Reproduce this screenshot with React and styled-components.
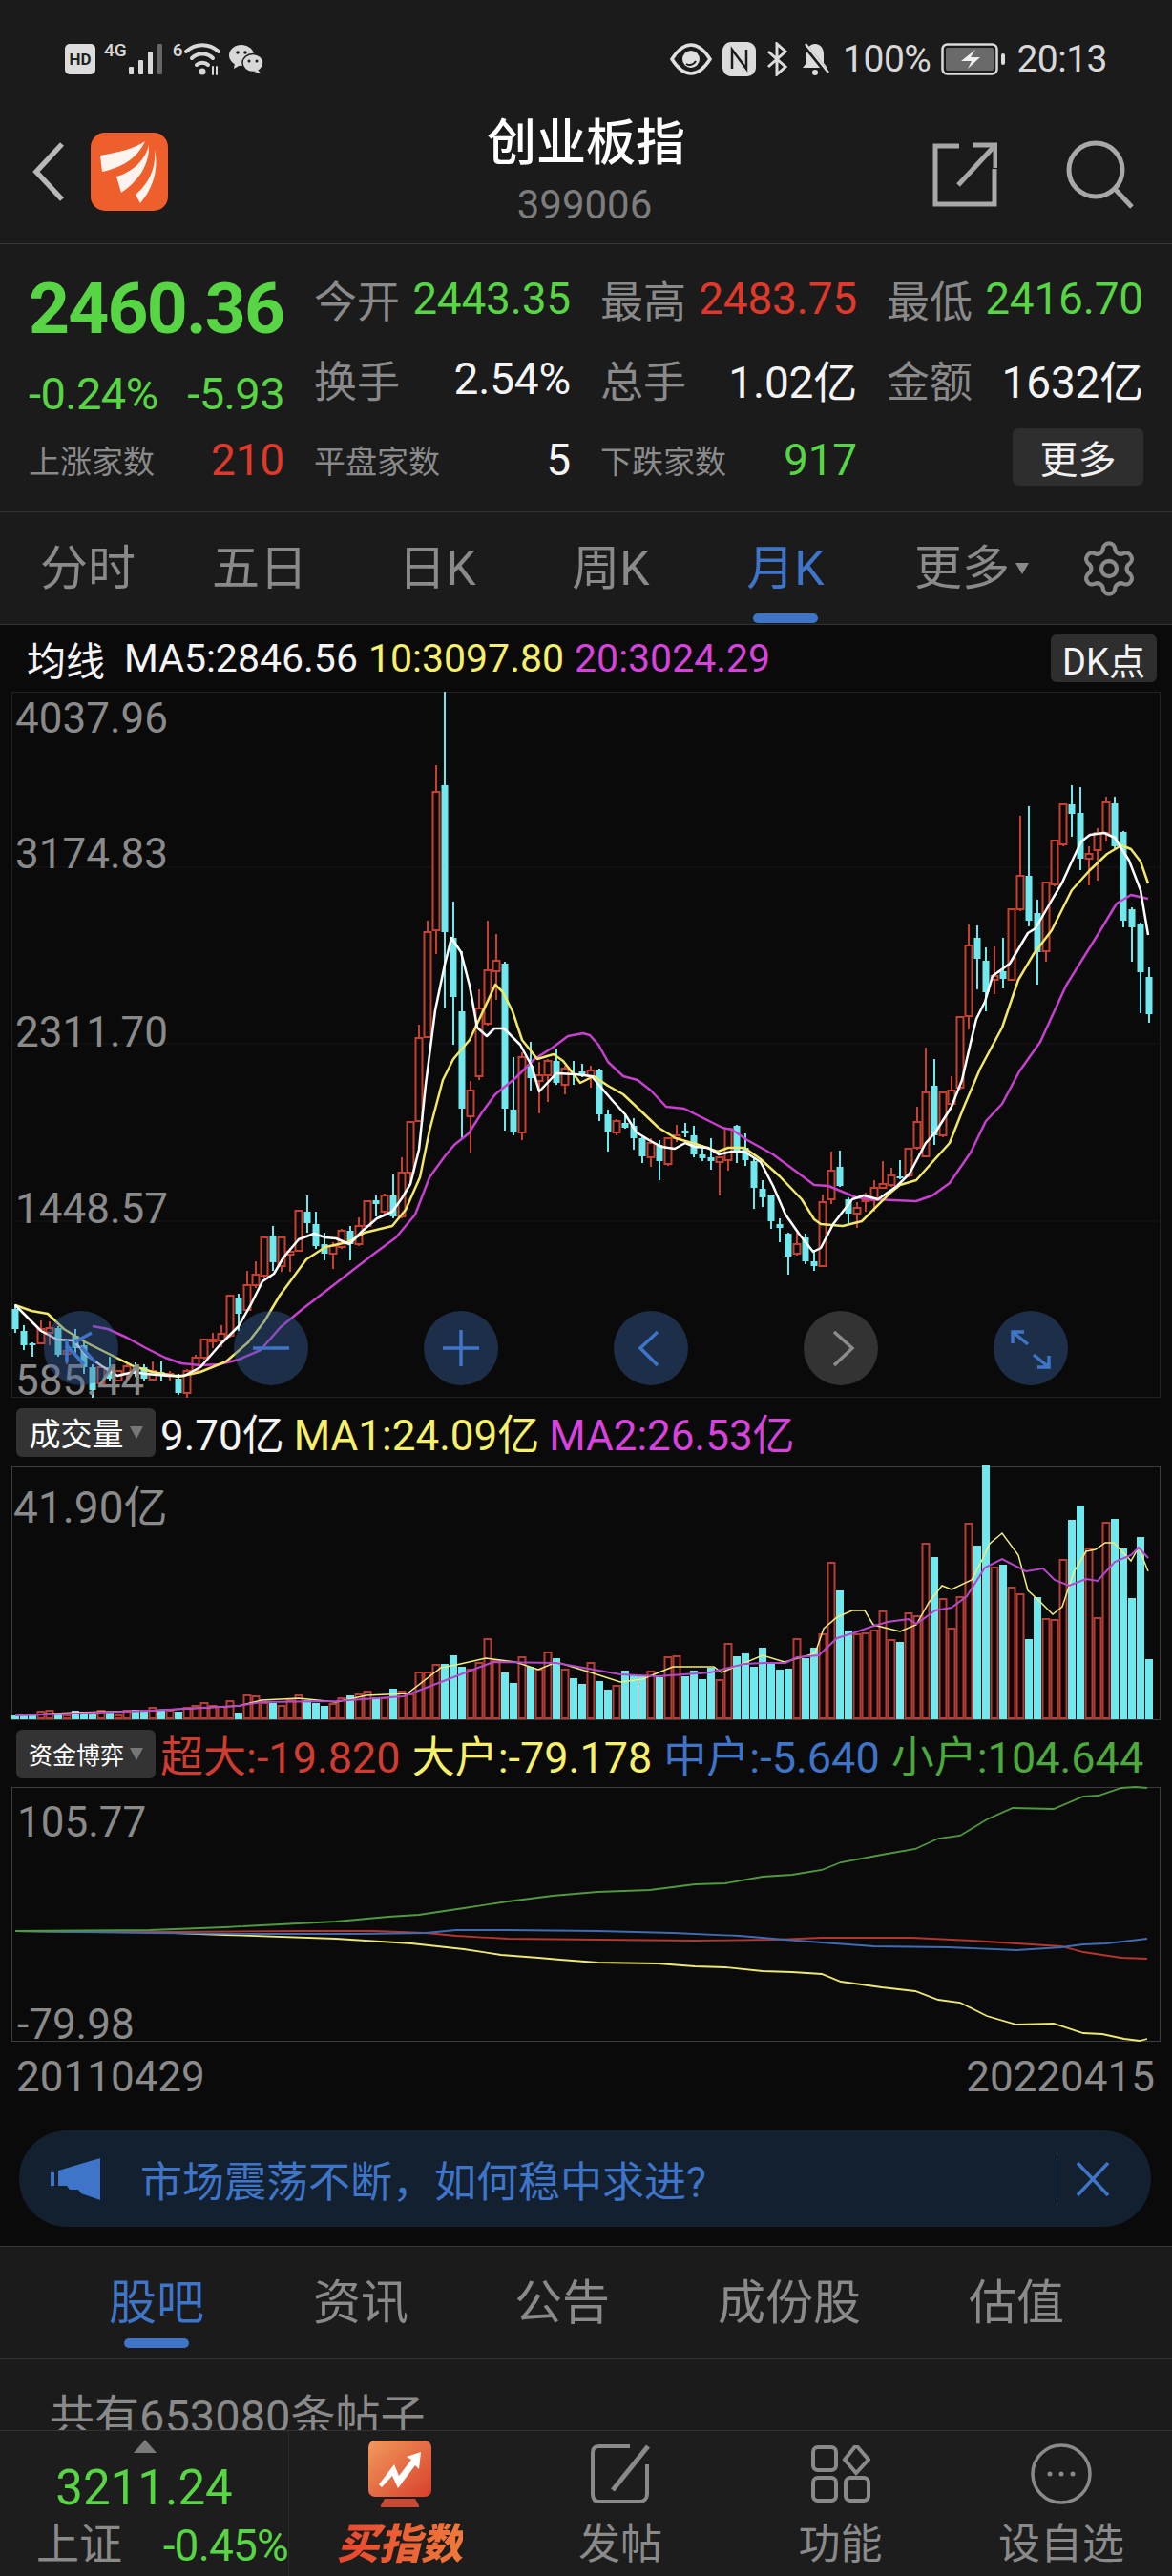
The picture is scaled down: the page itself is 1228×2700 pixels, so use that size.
import React from 'react'
import styled, { createGlobalStyle } from 'styled-components'
import { Settings } from 'lucide-react'

const GRAY = '#8a8a8a'
const BLUE = '#3f75c9'
const GREEN = '#58d544'
const RED = '#e0392b'
const WHITE = '#f4f4f4'
const YELLOW = '#f7f06a'
const MAGENTA = '#d743dc'
const CYAN = '#6fe9ee'
const CANDLE_RED = '#c8402f'
const PANEL = '#1b1b1b'
const DARK = '#0a0a0a'

// candles: type, high, body top, body bottom, low (page pixels)
const CANDLES = [
  ['c',1367,1372,1393,1397],['c',1389,1395,1410,1415],['c',1407,1408,1410,1422],['r',1384,1393,1408,1408],
  ['r',1385,1392,1397,1410],['c',1390,1392,1420,1422],['r',1407,1416,1419,1430],['c',1393,1400,1413,1420],
  ['c',1405,1410,1433,1440],['c',1430,1433,1457,1465],['r',1433,1433,1450,1452],['c',1422,1433,1445,1447],
  ['r',1437,1437,1447,1448],['r',1430,1432,1440,1445],['c',1428,1436,1440,1443],['c',1430,1433,1445,1447],
  ['r',1427,1437,1446,1447],['c',1427,1438,1441,1447],['r',1437,1440,1442,1447],['c',1440,1445,1460,1462],
  ['r',1435,1437,1460,1465],['r',1420,1423,1437,1440],['r',1404,1404,1423,1425],['r',1397,1404,1406,1413],
  ['r',1389,1398,1405,1412],['r',1357,1358,1400,1402],['c',1356,1360,1377,1395],['r',1332,1347,1373,1375],
  ['r',1322,1336,1347,1350],['r',1296,1297,1337,1340],['c',1285,1295,1323,1332],['r',1296,1297,1327,1333],
  ['r',1308,1312,1315,1333],['r',1268,1269,1311,1312],['c',1253,1270,1282,1292],['c',1270,1283,1306,1309],
  ['c',1292,1304,1314,1321],['r',1302,1306,1314,1330],['r',1288,1290,1307,1309],['c',1285,1290,1304,1321],
  ['r',1276,1285,1304,1306],['r',1258,1259,1285,1286],['c',1253,1258,1262,1275],['r',1251,1253,1270,1273],
  ['c',1231,1253,1275,1277],['r',1213,1229,1275,1277],['r',1175,1176,1229,1241],['r',1074,1088,1175,1176],
  ['r',965,977,1087,1088],['r',802,830,975,1000],['c',725,823,977,1057],['c',945,983,1045,1095],
  ['c',997,1060,1162,1193],['r',1133,1143,1170,1208],['r',1037,1057,1128,1132],['r',965,1017,1073,1075],
  ['r',979,1007,1018,1048],['c',1008,1010,1162,1185],['c',1108,1163,1187,1190],['r',1103,1108,1187,1195],
  ['c',1092,1117,1130,1143],['r',1113,1127,1133,1167],['r',1110,1112,1127,1155],['c',1100,1112,1135,1137],
  ['r',1117,1120,1137,1147],['c',1112,1125,1127,1137],['c',1115,1123,1127,1129],['r',1117,1122,1128,1140],
  ['c',1120,1122,1168,1175],['c',1163,1168,1186,1207],['r',1173,1175,1187,1190],['c',1167,1177,1182,1183],
  ['c',1172,1180,1193,1205],['c',1192,1193,1212,1219],['r',1193,1198,1213,1223],['c',1195,1200,1217,1237],
  ['r',1192,1193,1220,1222],['r',1179,1190,1193,1197],['c',1177,1185,1188,1192],['c',1180,1190,1210,1213],
  ['c',1200,1210,1214,1217],['c',1193,1213,1217,1226],['r',1212,1213,1218,1253],['r',1182,1183,1216,1227],
  ['c',1179,1180,1207,1219],['c',1188,1203,1216,1222],['c',1213,1217,1245,1267],['c',1237,1246,1255,1265],
  ['c',1252,1253,1280,1288],['c',1277,1283,1287,1302],['c',1292,1293,1317,1336],['r',1292,1304,1314,1316],
  ['c',1293,1297,1322,1325],['c',1310,1322,1327,1332],['r',1252,1260,1327,1328],['r',1207,1227,1257,1262],
  ['c',1206,1223,1243,1244],['c',1255,1257,1272,1282],['r',1260,1266,1272,1287],['r',1250,1257,1259,1270],
  ['r',1237,1245,1258,1270],['r',1217,1241,1245,1246],['r',1224,1232,1242,1244],['c',1216,1233,1235,1236],
  ['r',1203,1204,1232,1234],['r',1160,1176,1203,1205],['r',1098,1145,1212,1213],['c',1110,1138,1190,1200],
  ['r',1144,1145,1190,1192],['r',1128,1143,1157,1163],['r',1065,1066,1140,1142],['r',969,991,1065,1079],
  ['c',970,983,1005,1037],['c',993,1007,1040,1060],['r',992,1023,1027,1042],['c',983,1018,1026,1036],
  ['r',952,953,1027,1028],['r',855,918,953,955],['c',845,918,965,971],['c',943,957,998,1032],
  ['r',924,925,997,1008],['r',880,881,927,929],['r',842,843,885,887],['c',823,843,853,877],
  ['c',825,852,900,912],['r',887,895,900,928],['r',868,873,891,923],['r',835,841,873,882],
  ['c',835,842,887,889],['c',871,872,965,972],['c',951,953,972,1008],['c',967,968,1019,1062],
  ['c',1014,1024,1063,1072]
]

const MA5 = '16,1368 43,1395 60,1404 77,1405 90,1420 107,1432 123,1442 140,1438 153,1440 177,1442 193,1442 210,1433 230,1410 250,1390 263,1367 275,1343 287,1335 297,1318 313,1299 329,1293 341,1297 352,1298 366,1304 380,1290 395,1277 411,1270 421,1256 430,1241 439,1205 446,1137 456,1059 466,1011 473,983 483,998 492,1033 500,1077 510,1086 518,1078 528,1078 545,1095 557,1117 565,1144 583,1125 603,1126 620,1128 630,1140 643,1155 655,1168 667,1187 680,1195 693,1202 707,1204 718,1198 728,1202 742,1203 753,1210 767,1207 780,1207 797,1218 810,1243 823,1273 837,1293 852,1312 860,1308 873,1283 893,1257 905,1253 920,1257 940,1243 953,1230 970,1198 980,1187 997,1160 1008,1132 1017,1093 1023,1068 1032,1050 1040,1023 1058,1010 1077,978 1085,973 1100,947 1113,925 1123,903 1133,882 1142,875 1157,873 1168,878 1183,902 1195,933 1203,980'
const MA10 = '16,1368 33,1374 50,1377 67,1393 90,1407 110,1417 140,1432 160,1438 187,1443 210,1438 237,1427 260,1407 277,1385 293,1358 310,1335 321,1320 341,1307 364,1302 382,1292 411,1285 425,1268 440,1234 450,1185 464,1132 475,1110 492,1090 500,1073 519,1032 527,1040 537,1060 547,1090 563,1110 580,1105 590,1112 608,1135 622,1128 637,1138 653,1147 670,1163 690,1182 708,1193 732,1200 752,1207 763,1203 780,1203 797,1215 817,1233 840,1257 853,1278 860,1283 883,1285 903,1280 933,1250 943,1242 960,1237 977,1218 995,1198 1010,1160 1027,1120 1050,1077 1067,1027 1083,1000 1102,975 1123,933 1142,912 1160,895 1175,886 1185,890 1195,903 1203,926'
const MA20 = '97,1390 113,1393 133,1402 153,1413 173,1423 190,1429 210,1431 230,1430 250,1425 273,1415 294,1391 317,1372 352,1345 392,1314 415,1297 435,1273 450,1234 466,1212 476,1200 491,1188 505,1166 519,1147 540,1130 560,1110 579,1098 595,1086 611,1083 618,1085 627,1095 637,1113 653,1128 668,1132 682,1143 698,1160 717,1162 743,1175 757,1182 767,1184 783,1195 810,1210 837,1230 853,1242 868,1243 897,1255 913,1257 960,1259 977,1253 995,1240 1017,1208 1033,1175 1050,1157 1068,1123 1090,1092 1117,1033 1150,980 1170,947 1185,938 1203,942'

const VOL_TOPS = [
  1798,1798,1798,1794,1793,1797,1798,1793,1796,1797,1793,1795,1798,1793,1792,1793,1790,1792,1793,1794,
  1790,1788,1785,1788,1789,1783,1795,1777,1778,1785,1785,1788,1782,1777,1782,1785,1788,1786,1780,1777,
  1776,1773,1779,1780,1770,1773,1776,1753,1753,1745,1744,1735,1747,1750,1743,1718,1740,1753,1764,1737,
  1747,1750,1732,1738,1750,1759,1765,1743,1762,1771,1767,1751,1756,1757,1752,1758,1737,1736,1757,1751,
  1760,1748,1761,1723,1736,1733,1747,1727,1743,1750,1749,1718,1738,1727,1713,1638,1667,1709,1713,1712,
  1709,1689,1719,1721,1691,1694,1618,1632,1676,1707,1674,1597,1620,1536,1643,1640,1664,1671,1718,1674,
  1697,1698,1635,1593,1578,1623,1696,1596,1592,1623,1675,1611,1739
]
const VOL_MA1 = '16,1798 78,1795 157,1793 250,1788 274,1782 313,1780 352,1784 384,1777 427,1775 462,1748 478,1745 509,1738 540,1742 564,1750 583,1742 619,1753 650,1763 673,1760 705,1747 748,1747 756,1753 799,1735 822,1742 854,1733 863,1707 877,1695 893,1688 906,1688 915,1703 943,1710 960,1703 973,1680 987,1662 997,1666 1018,1656 1028,1637 1037,1618 1050,1607 1067,1630 1077,1667 1088,1677 1103,1692 1113,1684 1125,1648 1138,1626 1148,1624 1158,1617 1167,1617 1185,1636 1193,1622 1203,1647'
const VOL_MA2 = '16,1798 78,1796 157,1793 250,1788 274,1784 352,1783 423,1778 462,1763 501,1748 517,1742 583,1743 650,1755 689,1757 744,1753 780,1744 800,1743 823,1743 835,1737 858,1735 877,1717 893,1712 913,1705 930,1700 952,1697 960,1702 980,1688 997,1685 1013,1673 1032,1643 1050,1634 1075,1647 1093,1644 1105,1656 1120,1662 1138,1655 1150,1657 1168,1637 1185,1630 1193,1622 1203,1633'

const FUND_GREEN = '16,2024 157,2023 235,2020 352,2014 407,2009 439,2007 486,2000 532,1993 579,1987 626,1983 681,1981 728,1975 760,1974 799,1967 830,1965 861,1960 881,1952 924,1944 959,1938 983,1927 1006,1924 1034,1907 1061,1895 1104,1896 1135,1883 1151,1882 1175,1874 1190,1873 1202,1874'
const FUND_YELLOW = '16,2024 157,2025 235,2028 352,2032 431,2037 486,2043 525,2049 564,2052 587,2054 626,2057 689,2058 728,2061 760,2062 799,2066 830,2067 861,2069 881,2077 924,2083 959,2087 983,2096 1006,2099 1034,2113 1065,2122 1104,2121 1135,2131 1155,2132 1178,2137 1194,2139 1202,2137'
const FUND_BLUE = '16,2024 157,2026 274,2027 376,2027 446,2026 478,2023 532,2023 626,2024 705,2026 775,2029 822,2033 861,2036 916,2040 994,2041 1065,2044 1112,2041 1135,2038 1159,2037 1202,2032'
const FUND_RED = '16,2024 157,2025 313,2024 392,2024 446,2026 478,2029 532,2032 626,2033 728,2034 814,2033 861,2031 955,2031 1018,2034 1112,2040 1135,2046 1175,2052 1202,2053'

const candleX = i => 16 + 9 * i

const GlobalStyle = createGlobalStyle`
  body {
    margin: 0;
    background: ${DARK};
    font-family: Roboto, "Noto Sans CJK SC", sans-serif;
  }
`

const Page = styled.div`
  width: 1228px;
  height: 2700px;
  overflow: hidden;
  background: ${DARK};
  color: ${WHITE};
`

const TopPanel = styled.div`
  background: ${PANEL};
`

const StatusBar = styled.div`
  height: 110px;
  padding: 14px 68px 0;
  box-sizing: border-box;
  display: flex;
  align-items: center;
  justify-content: space-between;
  color: #d8d8d8;
`

const StatusGroup = styled.div`
  display: flex;
  align-items: center;
  gap: ${p => p.$gap || 10}px;
`

const HdBadge = styled.div`
  width: 32px;
  height: 32px;
  border-radius: 5px;
  background: #dcdcdc;
  color: #222;
  font-size: 17px;
  font-weight: 700;
  display: flex;
  align-items: center;
  justify-content: center;
`

const TinyMark = styled.span`
  font-size: ${p => p.$size || 19}px;
  font-weight: 500;
  align-self: flex-start;
  margin-right: -8px;
  line-height: 18px;
`

const StatusText = styled.span`
  font-size: 39px;
  line-height: 44px;
  letter-spacing: -0.5px;
`

const HeaderBar = styled.div`
  height: 145px;
  display: grid;
  grid-template-columns: 1fr auto 1fr;
  border-bottom: 1px solid #383838;
`

const HeaderLeft = styled.div`
  display: flex;
  align-items: center;
  gap: 26px;
  padding: 0 0 6px 33px;
`

const LogoBox = styled.div`
  width: 81px;
  height: 82px;
  border-radius: 15px;
  background: #ef5f2b;
  display: flex;
`

const TitleBlock = styled.div`
  display: flex;
  flex-direction: column;
  align-items: center;
  padding-top: 13px;
`

const Title = styled.div`
  font-size: 52px;
  line-height: 56px;
  font-weight: 500;
  color: #fff;
`

const Code = styled.div`
  font-size: 42px;
  line-height: 50px;
  margin: 11px 3px 0 0;
  color: #7d7d7d;
`

const HeaderRight = styled.div`
  display: flex;
  align-items: center;
  justify-content: flex-end;
  gap: 72px;
  padding: 0 39px 0 0;
`

const QuoteGrid = styled.div`
  display: grid;
  grid-template-columns: 268px 269px 269px 269px;
  grid-template-rows: 84px 84px 86px;
  column-gap: 31px;
  padding: 15px 0 11px 30px;
  background: ${PANEL};
  border-bottom: 1px solid #333;
`

const Price = styled.div`
  font-size: 75px;
  line-height: 64px;
  font-weight: 700;
  letter-spacing: -1.8px;
  color: ${GREEN};
  align-self: end;
  white-space: nowrap;
`

const ChangeRow = styled.div`
  display: flex;
  justify-content: space-between;
  align-items: center;
  padding-top: 30px;
  font-size: 47px;
  letter-spacing: -0.6px;
  color: ${GREEN};
`

const Stat = styled.div`
  display: flex;
  justify-content: space-between;
  align-items: center;
  white-space: nowrap;
`

const StatLabel = styled.span`
  color: ${GRAY};
  font-size: ${p => p.$size}px;
`

const StatValue = styled.span`
  color: ${p => p.$color};
  font-size: 46px;
  letter-spacing: -0.2px;
`

const MoreButton = styled.div`
  justify-self: end;
  align-self: center;
  width: 137px;
  height: 60px;
  margin-top: -6px;
  border-radius: 6px;
  background: #2e2e2e;
  color: #f0f0f0;
  font-size: 40px;
  display: flex;
  align-items: center;
  justify-content: center;
`

const PeriodTabs = styled.div`
  height: 117px;
  display: grid;
  grid-template-columns: 184px 176px 196px 168px 198px 192px 96px;
  align-items: center;
  background: ${PANEL};
  border-bottom: 1px solid #333;
`

const TabCell = styled.div`
  position: relative;
  text-align: center;
  font-size: 50px;
  line-height: 60px;
  color: ${p => (p.$active ? BLUE : GRAY)};
  display: flex;
  justify-content: center;
  align-items: center;
  white-space: nowrap;

  &::after {
    content: '';
    display: ${p => (p.$active ? 'block' : 'none')};
    position: absolute;
    left: 50%;
    bottom: -${p => p.$lineOffset || 17}px;
    width: 68px;
    height: 10px;
    margin-left: -34px;
    border-radius: 5px;
    background: ${BLUE};
  }
`

const Caret = styled.span`
  width: 0;
  height: 0;
  margin-left: 6px;
  border-left: 7px solid transparent;
  border-right: 7px solid transparent;
  border-top: 12px solid ${GRAY};
`

const LegendRow = styled.div`
  height: ${p => p.$height}px;
  display: flex;
  align-items: center;
  gap: ${p => p.$gap || 15}px;
  padding: 0 ${p => p.$right || 0}px 0 ${p => p.$left}px;
  font-size: ${p => p.$size}px;
  white-space: nowrap;
`

const LegendText = styled.span`
  color: ${p => p.$color || WHITE};
  margin-left: ${p => p.$offset || 0}px;
`

const DkBadge = styled.div`
  margin-left: auto;
  width: 111px;
  height: 50px;
  border-radius: 6px;
  background: #2e2e2e;
  display: flex;
  align-items: center;
  justify-content: center;
  font-size: 38px;
`

const IndicatorSelect = styled.div`
  width: 146px;
  height: 51px;
  border-radius: 6px;
  background: #333;
  color: #fff;
  display: flex;
  align-items: center;
  justify-content: center;
  gap: 6px;
  font-size: ${p => p.$size}px;
`

const SelectCaret = styled.span`
  width: 0;
  height: 0;
  border-left: 7px solid transparent;
  border-right: 7px solid transparent;
  border-top: 13px solid #777;
`

const ChartFrame = styled.div`
  position: relative;
  width: 1204px;
  height: ${p => p.$height}px;
  margin-left: 12px;
  box-shadow: inset 0 0 0 1px ${p => p.$border};
`

const ChartSvg = styled.svg`
  position: absolute;
  left: 0;
  top: 0;
  overflow: visible;
`

const AxisLabel = styled.div`
  position: absolute;
  left: ${p => p.$left || 4}px;
  top: ${p => p.$top}px;
  font-size: ${p => p.$size || 44}px;
  line-height: 50px;
  color: ${GRAY};
  white-space: nowrap;
`

const ZoomControls = styled.div`
  position: absolute;
  left: 34px;
  top: 649px;
  display: flex;
  gap: 121px;
`

const ZoomButton = styled.div`
  width: 78px;
  height: 78px;
  border-radius: 50%;
  background: ${p => (p.$muted ? 'rgba(110,110,110,.42)' : 'rgba(58,100,160,.42)')};
  display: flex;
`

const DateRow = styled.div`
  height: 74px;
  padding: 0 18px 0 17px;
  display: flex;
  align-items: center;
  justify-content: space-between;
  font-size: 44px;
  color: ${GRAY};
`

const NoticeWrap = styled.div`
  padding: 19px 22px 20px 20px;
`

const NoticePill = styled.div`
  height: 101px;
  border-radius: 50px;
  background: #13202f;
  display: flex;
  align-items: center;
  padding: 0 43px 0 33px;
  color: ${BLUE};
  font-size: 44px;
`

const NoticeText = styled.span`
  margin-left: 42px;
  flex: 1;
`

const NoticeClose = styled.div`
  border-left: 1px solid #33537f;
  padding-left: 19px;
  height: 44px;
  display: flex;
  align-items: center;
`

const LowerPanel = styled.div`
  background: ${PANEL};
  border-top: 1px solid #383838;
`

const NewsTabs = styled.div`
  height: 117px;
  padding-left: 57px;
  display: grid;
  grid-template-columns: 214px 214px 208px 268px 208px;
  align-items: center;
  border-bottom: 1px solid #333;
`

const PostCount = styled.div`
  height: 74px;
  overflow: hidden;
  padding: 30px 0 0 52px;
  box-sizing: border-box;
  font-size: 47px;
  line-height: 60px;
  color: ${GRAY};
`

const BottomBar = styled.div`
  height: 153px;
  display: grid;
  grid-template-columns: 303px 232px 230px 231px 232px;
  background: #1d1d1d;
  border-top: 1px solid #333;
  box-sizing: border-box;
`

const IndexCell = styled.div`
  position: relative;
  border-right: 1px solid #2a2a2a;
  display: flex;
  flex-direction: column;
  align-items: center;
  padding-top: 32px;
`

const UpTriangle = styled.span`
  position: absolute;
  top: 9px;
  left: 140px;
  width: 0;
  height: 0;
  border-left: 12px solid transparent;
  border-right: 12px solid transparent;
  border-bottom: 14px solid #7a7a7a;
`

const IndexValue = styled.div`
  font-size: 51px;
  line-height: 56px;
  color: ${GREEN};
`

const IndexFoot = styled.div`
  align-self: stretch;
  display: flex;
  align-items: center;
  justify-content: space-between;
  padding-left: 38px;
  margin-top: 6px;
  line-height: 52px;
  white-space: nowrap;
`

const IndexName = styled.span`
  font-size: 45px;
  color: ${GRAY};
`

const IndexChange = styled.span`
  font-size: 46px;
  letter-spacing: -0.8px;
  color: ${GREEN};
`

const NavItem = styled.div`
  display: flex;
  flex-direction: column;
  align-items: center;
  justify-content: flex-end;
  padding-bottom: 7px;
  color: ${GRAY};
  font-size: 44px;
  line-height: 52px;
`

const NavIcon = styled.div`
  height: 72px;
  margin-bottom: 12px;
  display: flex;
  align-items: center;
  justify-content: center;
`

const BuyLabel = styled.span`
  font-weight: 900;
  font-style: italic;
  background: linear-gradient(90deg, #e8452f, #ef7a3a);
  -webkit-background-clip: text;
  background-clip: text;
  color: transparent;
`

const STAT_ROWS = [
  [['今开', '2443.35', GREEN], ['最高', '2483.75', RED], ['最低', '2416.70', GREEN]],
  [['换手', '2.54%', WHITE], ['总手', '1.02亿', WHITE], ['金额', '1632亿', WHITE]]
]
const PERIODS = ['分时', '五日', '日K', '周K', '月K']
const NEWS = ['股吧', '资讯', '公告', '成份股', '估值']

function Signal() {
  return (
    <svg width="38" height="34" viewBox="0 0 38 34">
      <rect x="1" y="25" width="5" height="8" rx="1" fill="#d8d8d8" />
      <rect x="11" y="18" width="5" height="15" rx="1" fill="#d8d8d8" />
      <rect x="21" y="9" width="5" height="24" rx="1" fill="#d8d8d8" />
      <rect x="31" y="1" width="5" height="32" rx="1" fill="#666" />
    </svg>
  )
}

function Wifi() {
  return (
    <svg width="38" height="36" viewBox="0 0 38 36" fill="none" stroke="#d8d8d8" strokeWidth="4" strokeLinecap="round">
      <path d="M2 10C12 1 26 1 36 10" />
      <path d="M8 17C14 11 24 11 30 17" />
      <path d="M13 24C16 21 22 21 25 24" />
      <circle cx="19" cy="31" r="3.5" fill="#d8d8d8" stroke="none" />
      <path d="M30 26v8M34 26v8" strokeWidth="2" />
    </svg>
  )
}

function WeChat() {
  return (
    <svg width="36" height="32" viewBox="0 0 36 32">
      <ellipse cx="13" cy="12" rx="13" ry="11" fill="#d8d8d8" />
      <path d="M6 20l-1 6 7-4z" fill="#d8d8d8" />
      <ellipse cx="25" cy="20" rx="11" ry="9.5" fill="#d8d8d8" stroke="#1b1b1b" strokeWidth="1.5" />
      <path d="M30 27l3 4-7-2z" fill="#d8d8d8" />
      <circle cx="9" cy="9" r="1.8" fill="#1b1b1b" />
      <circle cx="17" cy="9" r="1.8" fill="#1b1b1b" />
      <circle cx="21" cy="18" r="1.5" fill="#1b1b1b" />
      <circle cx="29" cy="18" r="1.5" fill="#1b1b1b" />
    </svg>
  )
}

function Eye() {
  return (
    <svg width="44" height="34" viewBox="0 0 44 34" fill="none" stroke="#e0e0e0" strokeWidth="3.5">
      <path d="M2 17C9 6 15 2 22 2s13 4 20 15c-7 11-13 15-20 15S9 28 2 17z" />
      <circle cx="22" cy="17" r="9" fill="#e0e0e0" stroke="none" />
      <path d="M17 22c3 2 8 1 10-3" stroke="#1b1b1b" strokeWidth="2" />
    </svg>
  )
}

function NfcMark() {
  return (
    <svg width="35" height="36" viewBox="0 0 35 36" fill="none">
      <rect x="0" y="0" width="35" height="36" rx="9" fill="#dcdcdc" />
      <path d="M10 28V8l15 20V8" stroke="#1b1b1b" strokeWidth="2.5" />
    </svg>
  )
}

function Bluetooth() {
  return (
    <svg width="22" height="36" viewBox="0 0 22 36" fill="none" stroke="#dcdcdc" strokeWidth="3">
      <path d="M2 10l18 16-9 8V2l9 8L2 26" />
    </svg>
  )
}

function BellOff() {
  return (
    <svg width="36" height="36" viewBox="0 0 36 36">
      <path d="M18 2c6 0 9 5 9 11v9l4 5H5l4-5v-9C9 7 12 2 18 2z" fill="#dcdcdc" />
      <circle cx="18" cy="32" r="3" fill="#dcdcdc" />
      <path d="M6 2l26 32" stroke="#1b1b1b" strokeWidth="5" />
      <path d="M8 2l24 30" stroke="#dcdcdc" strokeWidth="2.5" />
    </svg>
  )
}

function Battery() {
  return (
    <svg width="68" height="34" viewBox="0 0 68 34">
      <rect x="1.5" y="1.5" width="57" height="31" rx="5" fill="none" stroke="#dcdcdc" strokeWidth="2.5" />
      <rect x="5" y="5" width="50" height="24" rx="2" fill="#6a6a6a" />
      <rect x="63" y="11" width="4" height="12" rx="2" fill="#dcdcdc" />
      <path d="M36 7l-5 8h10L28 27l4-8H21z" fill="#f0f0f0" />
    </svg>
  )
}

function BackChevron() {
  return (
    <svg width="36" height="62" viewBox="0 0 36 62" fill="none" stroke="#b8b8b8" strokeWidth="5.5">
      <path d="M32 2L5 31l27 29" />
    </svg>
  )
}

function Logo() {
  return (
    <svg width="81" height="82" viewBox="0 0 81 82" fill="#fdf3ee">
      <path d="M57 9C46 17 27 21 10 24l2 17C32 37 49 27 57 9z" />
      <path d="M61 13C57 30 42 42 27 46l5 17C47 53 62 36 61 13z" />
      <path d="M67 18C69 40 58 56 47 65l5 9C64 60 72 40 67 18z" />
    </svg>
  )
}

function ShareIcon() {
  return (
    <svg width="68" height="68" viewBox="0 0 68 68" fill="none" stroke="#a8a8a8" strokeWidth="5">
      <path d="M28 4H3v61h62V28" />
      <path d="M42 3h24v24" />
      <path d="M64 5L27 45" />
    </svg>
  )
}

function SearchIcon() {
  return (
    <svg width="72" height="72" viewBox="0 0 72 72" fill="none" stroke="#a8a8a8" strokeWidth="5">
      <circle cx="31" cy="31" r="28" />
      <path d="M52 52l17 18" />
    </svg>
  )
}

function MainChart() {
  return (
    <ChartSvg width="1204" height="740" viewBox="12 725 1204 740">
      {[909, 1094, 1280].map(y => (
        <line key={y} x1="12" x2="1216" y1={y} y2={y} stroke="#161616" strokeWidth="1" />
      ))}
      {CANDLES.map(([type, high, top, bottom, low], i) => {
        const x = candleX(i)
        const color = type === 'r' ? CANDLE_RED : CYAN
        return (
          <g key={i}>
            <line x1={x} x2={x} y1={high} y2={low} stroke={color} strokeWidth="2" />
            {type === 'r' ? (
              <rect x={x - 3.5} y={top} width="7" height={Math.max(bottom - top, 1)} fill={DARK} stroke={color} strokeWidth="2" />
            ) : (
              <rect x={x - 3.5} y={top} width="7" height={Math.max(bottom - top, 2)} fill={color} />
            )}
          </g>
        )
      })}
      <polyline points={MA20} fill="none" stroke="#c93fd0" strokeWidth="2.5" strokeLinejoin="round" />
      <polyline points={MA10} fill="none" stroke="#f3e768" strokeWidth="2.5" strokeLinejoin="round" />
      <polyline points={MA5} fill="none" stroke="#ffffff" strokeWidth="2.5" strokeLinejoin="round" />
    </ChartSvg>
  )
}

function VolumeChart() {
  return (
    <ChartSvg width="1204" height="266" viewBox="12 1537 1204 266">
      {VOL_TOPS.map((top, i) => {
        const x = candleX(i)
        return CANDLES[i][0] === 'r' ? (
          <rect key={i} x={x - 3.5} y={top} width="7" height={1801 - top} fill="#120505" stroke="#b53f36" strokeWidth="2" />
        ) : (
          <rect key={i} x={x - 4} y={top} width="8" height={1802 - top} fill={CYAN} />
        )
      })}
      <polyline points={VOL_MA1} fill="none" stroke="#f3ec80" strokeWidth="1.5" />
      <polyline points={VOL_MA2} fill="none" stroke="#b649c9" strokeWidth="2" />
    </ChartSvg>
  )
}

function FundChart() {
  return (
    <ChartSvg width="1204" height="267" viewBox="12 1873 1204 267">
      <polyline points={FUND_YELLOW} fill="none" stroke="#eee873" strokeWidth="1.8" />
      <polyline points={FUND_RED} fill="none" stroke="#b8352d" strokeWidth="1.8" />
      <polyline points={FUND_BLUE} fill="none" stroke="#3f6db5" strokeWidth="1.8" />
      <polyline points={FUND_GREEN} fill="none" stroke="#4f9a3e" strokeWidth="1.8" />
    </ChartSvg>
  )
}

function ControlIcon({ d, color = BLUE, width = 3.5 }) {
  return (
    <svg width="78" height="78" viewBox="0 0 78 78" fill="none" stroke={color} strokeWidth={width}>
      <path d={d} />
    </svg>
  )
}

const CONTROLS = [
  { d: 'M24 30v24M24 36l18 20M32 33l18-10M39 38l15 16' },
  { d: 'M20 39h38' },
  { d: 'M20 39h38M39 20v38' },
  { d: 'M46 22L28 39l18 18' },
  { d: 'M32 22l19 17-19 18', color: '#8c8c8c', muted: true },
  { d: 'M20 34V22h12M20 22l16 13M58 47v12H46M58 59L42 46' }
]

function App() {
  return (
    <Page>
      <GlobalStyle />
      <TopPanel>
        <StatusBar>
          <StatusGroup $gap={9}>
            <HdBadge>HD</HdBadge>
            <TinyMark>4G</TinyMark>
            <Signal />
            <TinyMark $size={19}>6</TinyMark>
            <Wifi />
            <WeChat />
          </StatusGroup>
          <StatusGroup $gap={11}>
            <Eye />
            <NfcMark />
            <Bluetooth />
            <BellOff />
            <StatusText>100%</StatusText>
            <Battery />
            <StatusText>20:13</StatusText>
          </StatusGroup>
        </StatusBar>
        <HeaderBar>
          <HeaderLeft>
            <BackChevron />
            <LogoBox><Logo /></LogoBox>
          </HeaderLeft>
          <TitleBlock>
            <Title>创业板指</Title>
            <Code>399006</Code>
          </TitleBlock>
          <HeaderRight>
            <ShareIcon />
            <SearchIcon />
          </HeaderRight>
        </HeaderBar>
      </TopPanel>

      <QuoteGrid>
        <Price>2460.36</Price>
        {STAT_ROWS[0].map(([label, value, color]) => (
          <Stat key={label}>
            <StatLabel $size={45}>{label}</StatLabel>
            <StatValue $color={color}>{value}</StatValue>
          </Stat>
        ))}
        <ChangeRow>
          <span>-0.24%</span>
          <span>-5.93</span>
        </ChangeRow>
        {STAT_ROWS[1].map(([label, value, color]) => (
          <Stat key={label}>
            <StatLabel $size={45}>{label}</StatLabel>
            <StatValue $color={color}>{value}</StatValue>
          </Stat>
        ))}
        <Stat>
          <StatLabel $size={33}>上涨家数</StatLabel>
          <StatValue $color={RED}>210</StatValue>
        </Stat>
        <Stat>
          <StatLabel $size={33}>平盘家数</StatLabel>
          <StatValue $color={WHITE}>5</StatValue>
        </Stat>
        <Stat>
          <StatLabel $size={33}>下跌家数</StatLabel>
          <StatValue $color={GREEN}>917</StatValue>
        </Stat>
        <MoreButton>更多</MoreButton>
      </QuoteGrid>

      <PeriodTabs>
        {PERIODS.map(name => (
          <TabCell key={name} $active={name === '月K'} $lineOffset={27}>{name}</TabCell>
        ))}
        <TabCell>更多<Caret /></TabCell>
        <TabCell><Settings size={64} color={GRAY} strokeWidth={1.6} /></TabCell>
      </PeriodTabs>

      <LegendRow $height={70} $left={28} $right={16} $size={41} $gap={11}>
        <LegendText>均线</LegendText>
        <LegendText $offset={9}>MA5:2846.56</LegendText>
        <LegendText $color={YELLOW}>10:3097.80</LegendText>
        <LegendText $color={MAGENTA}>20:3024.29</LegendText>
        <DkBadge>DK点</DkBadge>
      </LegendRow>

      <ChartFrame $height={740} $border="#222">
        <MainChart />
        <AxisLabel $top={3}>4037.96</AxisLabel>
        <AxisLabel $top={145}>3174.83</AxisLabel>
        <AxisLabel $top={332}>2311.70</AxisLabel>
        <AxisLabel $top={517}>1448.57</AxisLabel>
        <AxisLabel $top={697}>585.44</AxisLabel>
        <ZoomControls>
          {CONTROLS.map(({ d, color, muted }) => (
            <ZoomButton key={d} $muted={muted}>
              <ControlIcon d={d} color={color} />
            </ZoomButton>
          ))}
        </ZoomControls>
      </ChartFrame>

      <LegendRow $height={72} $left={17} $size={44} $gap={10}>
        <IndicatorSelect $size={33}>成交量<SelectCaret /></IndicatorSelect>
        <LegendText $offset={-5}>9.70亿</LegendText>
        <LegendText $color={YELLOW}>MA1:24.09亿</LegendText>
        <LegendText $color={MAGENTA}>MA2:26.53亿</LegendText>
      </LegendRow>

      <ChartFrame $height={266} $border="#3d3d3d">
        <VolumeChart />
        <AxisLabel $left={2} $top={18} $size={46}>41.90亿</AxisLabel>
      </ChartFrame>

      <LegendRow $height={70} $left={17} $size={45} $gap={12}>
        <IndicatorSelect $size={25}>资金博弈<SelectCaret /></IndicatorSelect>
        <LegendText $color="#d03c30" $offset={-7}>超大:-19.820</LegendText>
        <LegendText $color={YELLOW}>大户:-79.178</LegendText>
        <LegendText $color="#3f75c9">中户:-5.640</LegendText>
        <LegendText $color="#4caa3c">小户:104.644</LegendText>
      </LegendRow>

      <ChartFrame $height={267} $border="#3d3d3d">
        <FundChart />
        <AxisLabel $left={6} $top={12}>105.77</AxisLabel>
        <AxisLabel $left={6} $top={224}>-79.98</AxisLabel>
      </ChartFrame>

      <DateRow>
        <span>20110429</span>
        <span>20220415</span>
      </DateRow>

      <NoticeWrap>
        <NoticePill>
          <svg width="52" height="44" viewBox="0 0 52 44" fill={BLUE}>
            <path d="M0 15h4v14H0zM8 13L52 0v44L32 37l-3-4h-9l-3-4H8z" />
          </svg>
          <NoticeText>市场震荡不断，如何稳中求进?</NoticeText>
          <NoticeClose>
            <svg width="36" height="36" viewBox="0 0 36 36" fill="none" stroke={BLUE} strokeWidth="3.5">
              <path d="M2 1l32 34M34 1L2 35" />
            </svg>
          </NoticeClose>
        </NoticePill>
      </NoticeWrap>

      <LowerPanel>
        <NewsTabs>
          {NEWS.map(name => (
            <TabCell key={name} $active={name === '股吧'} $lineOffset={17}>{name}</TabCell>
          ))}
        </NewsTabs>
        <PostCount>共有653080条帖子</PostCount>
      </LowerPanel>

      <BottomBar>
        <IndexCell>
          <UpTriangle />
          <IndexValue>3211.24</IndexValue>
          <IndexFoot>
            <IndexName>上证</IndexName>
            <IndexChange>-0.45%</IndexChange>
          </IndexFoot>
        </IndexCell>
        <NavItem>
          <NavIcon>
            <svg width="68" height="70" viewBox="0 0 68 70">
              <defs>
                <linearGradient id="buyFill" x1="0" y1="0" x2="1" y2="1">
                  <stop offset="0" stopColor="#f19a5c" />
                  <stop offset="1" stopColor="#d8402c" />
                </linearGradient>
              </defs>
              <rect x="1" y="0" width="66" height="59" rx="7" fill="url(#buyFill)" />
              <path d="M12 46L28 25l5 12 13-17-5-3 15-5-2 18-4-4-18 24-6-13-11 12z" fill="#fff" />
              <path d="M18 61h32l4 7v2H14v-2z" fill="#c94a33" />
            </svg>
          </NavIcon>
          <BuyLabel>买指数</BuyLabel>
        </NavItem>
        <NavItem>
          <NavIcon>
            <svg width="64" height="64" viewBox="0 0 64 64" fill="none" stroke={GRAY} strokeWidth="4">
              <path d="M42 3H10C5 3 3 5 3 10v43c0 5 2 8 7 8h42c5 0 8-3 8-8V22" />
              <path d="M61 3L24 49" strokeWidth="5" />
            </svg>
          </NavIcon>
          发帖
        </NavItem>
        <NavItem>
          <NavIcon>
            <svg width="62" height="60" viewBox="0 0 62 60" fill="none" stroke={GRAY} strokeWidth="4">
              <rect x="2" y="2" width="24" height="24" rx="5" />
              <rect x="2" y="34" width="24" height="24" rx="5" />
              <rect x="36" y="34" width="24" height="24" rx="5" />
              <path d="M47 0l13 15-13 14-12-14z" />
            </svg>
          </NavIcon>
          功能
        </NavItem>
        <NavItem>
          <NavIcon>
            <svg width="64" height="64" viewBox="0 0 64 64" fill="none" stroke={GRAY} strokeWidth="3.5">
              <circle cx="32" cy="32" r="30" />
              <circle cx="20" cy="32" r="2.5" fill={GRAY} stroke="none" />
              <circle cx="32" cy="32" r="2.5" fill={GRAY} stroke="none" />
              <circle cx="44" cy="32" r="2.5" fill={GRAY} stroke="none" />
            </svg>
          </NavIcon>
          设自选
        </NavItem>
      </BottomBar>
    </Page>
  )
}

export default App
